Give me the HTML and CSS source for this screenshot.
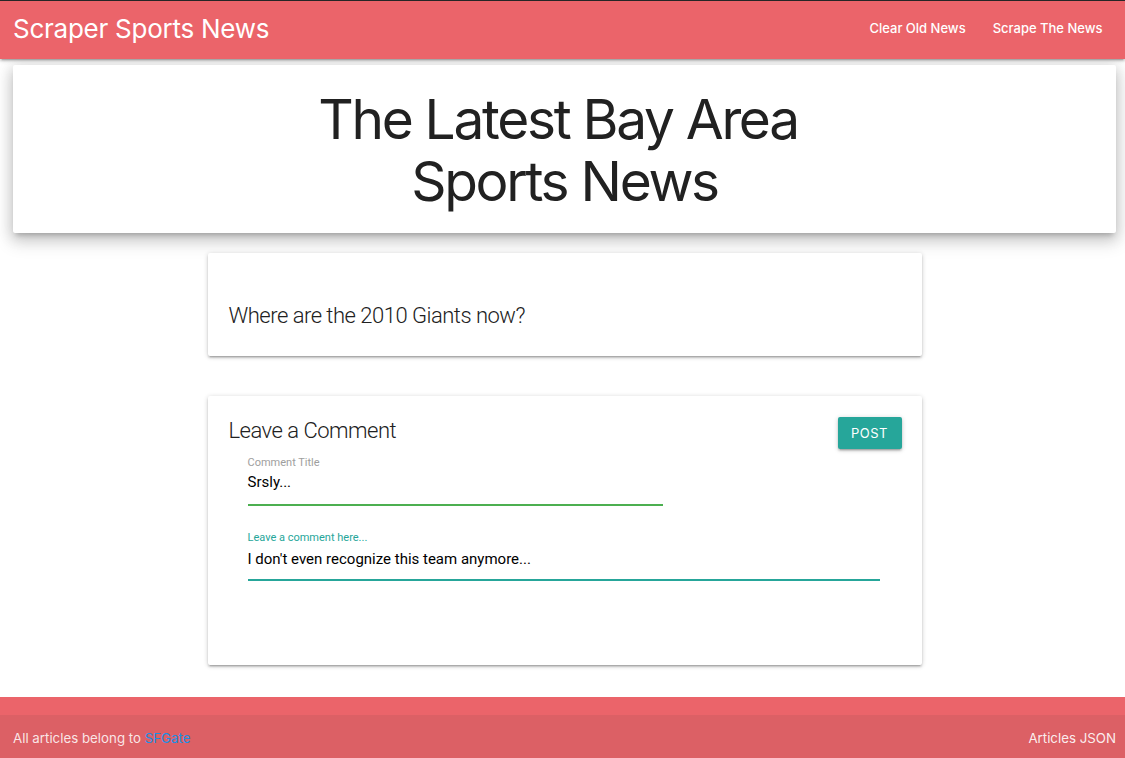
FILE: index.html
```html
<!DOCTYPE html>
<html lang="en">
<head>
<meta charset="utf-8">
<title>Scraper Sports News</title>
<link rel="stylesheet" href="styles.css">
</head>
<body>
<nav class="navbar">
  <a class="brand" href="#">Scraper Sports News</a>
  <ul class="nav-links">
    <li><a href="#">Clear Old News</a></li>
    <li><a href="#">Scrape The News</a></li>
  </ul>
</nav>

<main class="page">
  <header class="hero card-deep">
    <h1 class="hero-title"><span class="hero-line first">The Latest Bay Area</span><span class="hero-line">Sports News</span></h1>
  </header>

  <section class="content">
    <article class="card article-card">
      <h5 class="card-heading">Where are the 2010 Giants now?</h5>
    </article>

    <section class="card comment-card">
      <div class="comment-head">
        <h5 class="card-heading">Leave a Comment</h5>
        <button class="btn" type="button">Post</button>
      </div>
      <form class="comment-form">
        <div class="field field-title">
          <label class="field-label">Comment Title</label>
          <div class="field-input green">Srsly...</div>
        </div>
        <div class="field field-body">
          <label class="field-label teal">Leave a comment here...</label>
          <div class="field-input teal-line">I don't even recognize this team anymore...</div>
        </div>
      </form>
    </section>
  </section>
</main>

<footer class="footer">
  <div class="footer-top"></div>
  <div class="footer-copyright">
    <span>All articles belong to <a class="link" href="#">SFGate</a></span>
    <a class="footer-right" href="#">Articles JSON</a>
  </div>
</footer>
</body>
</html>
```

FILE: styles.css
```css
* { box-sizing: border-box; }

html, body {
  margin: 0;
  padding: 0;
  background: #ffffff;
  font-family: Inter, "Noto Sans", "Liberation Sans", sans-serif;
  color: rgba(0, 0, 0, 0.87);
}

a { text-decoration: none; color: inherit; }

/* NAV */
.navbar {
  display: flex;
  justify-content: space-between;
  align-items: flex-start;
  height: 59px;
  border-top: 1px solid #262626;
  background: #eb646a;
  padding: 0 9px 0 13px;
  box-shadow: 0 2px 2px 0 rgba(0,0,0,0.14), 0 3px 1px -2px rgba(0,0,0,0.12), 0 1px 5px 0 rgba(0,0,0,0.2);
  position: relative;
  z-index: 2;
}

.brand {
  color: #fff;
  font-size: 26px;
  line-height: 55px;
  font-weight: 400;
  letter-spacing: -0.25px;
}

.nav-links {
  display: flex;
  list-style: none;
  margin: 0;
  padding: 0;
}

.nav-links a {
  display: block;
  color: #fff;
  font-size: 13px;
  line-height: 55px;
  padding: 0 13.5px;
  font-weight: 500;
}

/* PAGE */
.page {
  padding: 6px 9px 0 13px;
}

.hero {
  background: #fff;
  padding: 23px 0 21px;
  text-align: center;
}

.card-deep {
  box-shadow: 0 8px 17px 2px rgba(0,0,0,0.14), 0 3px 14px 2px rgba(0,0,0,0.12), 0 5px 5px -3px rgba(0,0,0,0.2);
  border-radius: 2px;
}

.hero-title {
  margin: 0;
  font-size: 55px;
  line-height: 62px;
  font-weight: 400;
  letter-spacing: -2.3px;
  color: #212121;
}

.hero-line { display: block; }
.hero-line.first { padding-right: 13px; }

.content {
  width: 714px;
  margin: 20px auto 0;
  display: flex;
  flex-direction: column;
  gap: 40px;
}

.card {
  background: #fff;
  border-radius: 2px;
  box-shadow: 0 2px 2px 0 rgba(0,0,0,0.14), 0 3px 1px -2px rgba(0,0,0,0.12), 0 1px 5px 0 rgba(0,0,0,0.2);
}

.card-heading {
  margin: 0;
  font-family: Roboto, Inter, "Liberation Sans", sans-serif;
  font-size: 22px;
  line-height: 28px;
  font-weight: 300;
  letter-spacing: -0.5px;
  color: #212121;
}

.article-card {
  padding: 49px 22px 26px 21px;
}

.comment-card {
  padding: 21px 20px 84px 21px;
}

.comment-head {
  display: flex;
  justify-content: space-between;
  align-items: flex-start;
}

.btn {
  width: 64px;
  height: 32px;
  border: none;
  border-radius: 2px;
  background: #26a69a;
  color: #fff;
  font-family: inherit;
  font-size: 13px;
  letter-spacing: 0.5px;
  text-transform: uppercase;
  padding: 0;
  box-shadow: 0 2px 2px 0 rgba(0,0,0,0.14), 0 3px 1px -2px rgba(0,0,0,0.12), 0 1px 5px 0 rgba(0,0,0,0.2);
}

.comment-form {
  margin-left: 19px;
  display: flex;
  flex-direction: column;
}

.field-label {
  display: block;
  font-family: Roboto, Inter, "Liberation Sans", sans-serif;
  font-size: 11px;
  line-height: 14px;
  color: #9e9e9e;
}

.field-label.teal { color: #26a69a; }

.field-input {
  font-family: Roboto, Inter, "Liberation Sans", sans-serif;
  font-size: 15px;
  line-height: 20px;
  color: #000;
}

.field-title { width: 415px; margin-top: 7px; }
.field-title .field-input {
  margin-top: 2px;
  padding-bottom: 12px;
  border-bottom: 2px solid #4caf50;
}

.field-body { width: 632px; margin-top: 25px; }
.field-body .field-input {
  margin-top: 4px;
  padding-bottom: 10px;
  border-bottom: 2px solid #26a69a;
}

/* FOOTER */
.footer {
  margin-top: 32px;
  background: #eb646a;
}

.footer-top { height: 18px; }

.footer-copyright {
  display: flex;
  justify-content: space-between;
  padding: 13px 9px 13px 13px;
  background: rgba(51, 51, 51, 0.08);
  font-size: 13.3px;
  line-height: 20px;
  color: rgba(255, 255, 255, 0.85);
}

.link { color: #1a8fe3; }
.footer-right { color: rgba(255, 255, 255, 0.9); }
```
